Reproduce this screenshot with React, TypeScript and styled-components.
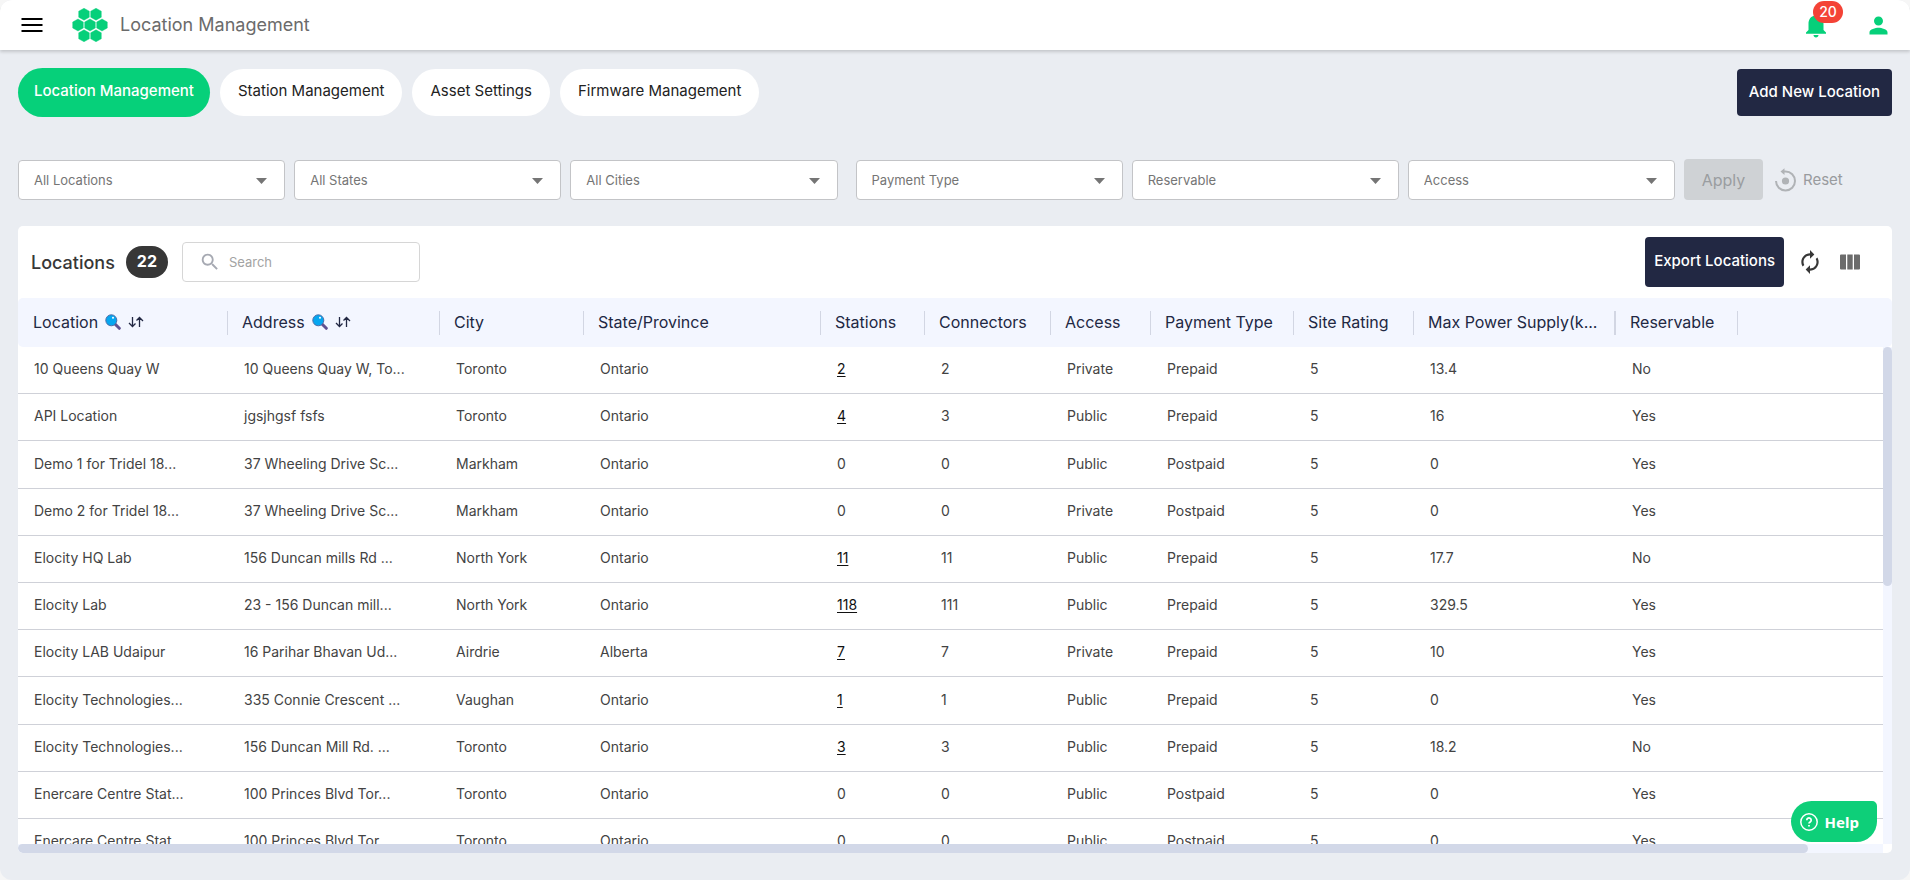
import React from "react";
import styled, { createGlobalStyle } from "styled-components";

const GlobalStyle = createGlobalStyle`
  *, *::before, *::after { box-sizing: border-box; }
  body { margin: 0; background: #f6f6f6; }
  body, button, input, select { font-family: Inter, "Liberation Sans", sans-serif; }
`;

const Page = styled.div`
  height: 100vh;
  min-height: 480px;
  display: flex;
  flex-direction: column;
  overflow: hidden;
  border-radius: 12px;
  background: #eaedf2;
`;

const TopBar = styled.header`
  flex: none;
  height: 50px;
  padding: 0 18px 0 20px;
  display: flex;
  align-items: center;
  background: #fff;
  box-shadow: 0 2px 3px rgba(0, 0, 0, 0.16);
`;

const IconButton = styled.button`
  display: grid;
  place-items: center;
  padding: 0;
  border: 0;
  background: none;
  color: inherit;
`;

const Logo = styled.svg`
  width: 36px;
  height: 34px;
  margin-left: 28px;
`;

const PageTitle = styled.h1`
  margin: 0 auto 0 12px;
  font-size: 18px;
  font-weight: 400;
  line-height: 24px;
  color: #6b6b6b;
`;

const TopActions = styled.div`
  display: flex;
  align-items: center;
  gap: 34px;
  color: #06d07a;
`;

const BellWrap = styled.div`
  position: relative;
`;

const CountBadge = styled.span`
  position: absolute;
  left: 12px;
  top: -9px;
  width: 30px;
  height: 22px;
  border-radius: 11px;
  background: #f44336;
  color: #fff;
  font-size: 14px;
  font-weight: 500;
  line-height: 21px;
  text-align: center;
`;

const TabBar = styled.nav`
  flex: none;
  display: flex;
  align-items: center;
  gap: 10px;
  padding: 18px 18px 0;
`;

const Tab = styled.button<{ $active?: boolean }>`
  height: ${(p) => (p.$active ? 49 : 47)}px;
  padding: 0 ${(p) => (p.$active ? 16 : 18)}px 4px;
  border: 0;
  border-radius: 25px;
  font-size: 15px;
  font-weight: ${(p) => (p.$active ? 500 : 400)};
  white-space: nowrap;
  background: ${(p) => (p.$active ? "#06d07a" : "#fff")};
  color: ${(p) => (p.$active ? "#fff" : "#222")};
`;

const DarkButton = styled.button<{ $tall?: boolean }>`
  height: ${(p) => (p.$tall ? 50 : 47)}px;
  padding: 0 ${(p) => (p.$tall ? 9 : 12)}px 3px;
  border: 0;
  border-radius: 4px;
  background: #222843;
  color: #fff;
  font-size: 15px;
  font-weight: 500;
  white-space: nowrap;
`;

const Spacer = styled.div`
  flex: 1;
`;

const FilterBar = styled.form`
  flex: none;
  display: flex;
  align-items: center;
  gap: 9px;
  margin: 42px 18px 26px;
`;

const FilterGroup = styled.div`
  flex: 1;
  display: flex;
  gap: 9px;
  & + & { margin-left: 9px; }
`;

const SelectBox = styled.div`
  flex: 1;
  min-width: 0;
  position: relative;
  height: 40px;
  border: 1px solid #c3c4c7;
  border-radius: 4px;
  background: #fff;
`;

const Select = styled.select`
  appearance: none;
  width: 100%;
  height: 100%;
  padding: 0 36px 0 15px;
  border: 0;
  background: none;
  color: #757575;
  font-size: 13px;
`;

const Caret = styled.svg`
  position: absolute;
  right: 17px;
  top: 17px;
  width: 11px;
  height: 6px;
  fill: #757575;
  pointer-events: none;
`;

const ApplyButton = styled.button`
  width: 79px;
  height: 41px;
  border: 0;
  border-radius: 4px;
  background: #cfd2d5;
  color: #9a9da0;
  font-size: 16px;
`;

const ResetButton = styled.button`
  width: 120px;
  display: flex;
  align-items: center;
  gap: 6px;
  padding: 0 0 0 2px;
  border: 0;
  background: none;
  color: #999b9e;
  font-size: 15px;
`;

const Card = styled.section`
  flex: 1;
  min-height: 0;
  display: flex;
  flex-direction: column;
  margin: 0 18px 27px;
  border-radius: 5px;
  overflow: hidden;
  background: #fff;
`;

const Toolbar = styled.div`
  flex: none;
  height: 72px;
  display: flex;
  align-items: center;
  padding: 0 32px 0 13px;
`;

const CardTitle = styled.h2`
  margin: 0;
  font-size: 18px;
  font-weight: 500;
  color: #373737;
`;

const TotalBadge = styled.span`
  margin: 0 14px 0 11px;
  width: 42px;
  height: 32px;
  border-radius: 16px;
  background: #373737;
  color: #fff;
  font-size: 16px;
  font-weight: 700;
  line-height: 31px;
  text-align: center;
`;

const SearchBox = styled.label`
  width: 238px;
  height: 40px;
  display: flex;
  align-items: center;
  gap: 8px;
  padding: 0 16px;
  border: 1px solid #d6d6d6;
  border-radius: 4px;
  color: #a6a9b2;
`;

const SearchInput = styled.input`
  flex: 1;
  min-width: 0;
  padding: 0;
  border: 0;
  outline: 0;
  font-size: 13px;
  color: #3d3d3d;
  &::placeholder { color: #a3a3a3; }
`;

const ToolIcons = styled.div`
  display: flex;
  align-items: center;
  gap: 17px;
  margin-left: 13px;
  color: #373737;
`;

const TableArea = styled.div`
  flex: 1;
  min-height: 0;
  position: relative;
  overflow: hidden;
`;

const Table = styled.table`
  width: 100%;
  table-layout: fixed;
  border-collapse: separate;
  border-spacing: 0;
`;

const HeadCell = styled.th`
  height: 49px;
  padding: 0 0 0 14px;
  background: #f3f6ff;
  color: #222843;
  font-size: 16px;
  font-weight: 400;
  text-align: left;
  white-space: nowrap;
  &:first-child { padding-left: 15px; border-radius: 5px 0 0 5px; }
  &:last-child { border-radius: 0 5px 5px 0; }
`;

const HeadInner = styled.div<{ $wideRule?: boolean }>`
  height: 24px;
  padding-bottom: 2px;
  display: flex;
  align-items: center;
  gap: 7px;
  border-right: ${(p) => (p.$wideRule ? 2 : 1)}px solid #d2d6e3;
`;

const Row = styled.tr`
  height: 47px;
  &:nth-child(5n + 3) { height: 48px; }
`;

const Cell = styled.td`
  padding: 0 0 3px 16px;
  border-bottom: 1px solid #cfd1d8;
  color: #434343;
  font-size: 14px;
  white-space: nowrap;
`;

const StationLink = styled.a`
  color: #111;
  text-decoration: underline;
  text-underline-offset: 2px;
`;

const VerticalTrack = styled.div`
  position: absolute;
  top: 49px;
  right: 0;
  bottom: 0;
  width: 9px;
  background: #f3f6ff;
`;

const VerticalThumb = styled.div`
  height: 48%;
  border-radius: 5px;
  background: #d2d8e8;
`;

const HorizontalTrack = styled.div`
  flex: none;
  height: 9px;
  margin-right: 9px;
  background: #f3f6ff;
`;

const HorizontalThumb = styled.div`
  width: 96%;
  height: 9px;
  border-radius: 5px;
  background: #d2d8e8;
`;

const HelpButton = styled.button`
  position: fixed;
  right: 33px;
  bottom: 38px;
  height: 41px;
  display: flex;
  align-items: center;
  gap: 7px;
  padding: 0 18px 0 9px;
  border: 0;
  border-radius: 21px 5px 21px 21px;
  background: #0ecf79;
  color: #fff;
  font-family: "Noto Sans", sans-serif;
  font-size: 15px;
  font-weight: 700;
`;

const Glyph = ({ d, size = 24 }: { d: string; size?: number }) => (
  <svg width={size} height={size} viewBox="0 0 24 24" fill="currentColor" aria-hidden="true">
    <path d={d} />
  </svg>
);

const MENU = "M1.500 5h21v2h-21zM1.500 11h21v2h-21zM1.500 17h21v2h-21z";
const BELL =
  "M12 22c1.100 0 2-.9 2-2h-4c0 1.100.9 2 2 2m6-6v-5c0-3.070-1.630-5.640-4.500-6.320V4c0-.83-.67-1.500-1.500-1.500s-1.500.67-1.500 1.500v.68C7.640 5.360 6 7.920 6 11v5l-2 2v1h16v-1z";
const PERSON =
  "M12 12c2.210 0 4-1.790 4-4s-1.790-4-4-4-4 1.790-4 4 1.790 4 4 4m0 2c-2.670 0-8 1.340-8 4v2h16v-2c0-2.660-5.330-4-8-4";
const SEARCH =
  "M15.500 14h-.79l-.28-.27C15.410 12.590 16 11.110 16 9.500 16 5.910 13.090 3 9.500 3S3 5.910 3 9.500 5.910 16 9.500 16c1.610 0 3.090-.59 4.230-1.570l.27.28v.79l5 4.990L20.490 19zm-6 0C7.010 14 5 11.990 5 9.500S7.010 5 9.500 5 14 7.010 14 9.500 11.990 14 9.500 14";
const RENEW =
  "M12 6v3l4-4-4-4v3c-4.420 0-8 3.580-8 8 0 1.570.46 3.030 1.240 4.260L6.700 14.800c-.45-.83-.7-1.790-.7-2.800 0-3.310 2.690-6 6-6m6.760 1.740L17.300 9.200c.44.84.7 1.790.7 2.800 0 3.310-2.690 6-6 6v-3l-4 4 4 4v-3c4.420 0 8-3.580 8-8 0-1.570-.46-3.030-1.240-4.260";

const hexPoints = (cx: number, cy: number) =>
  [[0, -6], [5.3, -3], [5.3, 3], [0, 6], [-5.3, 3], [-5.3, -3]]
    .map(([x, y]) => `${cx + x},${cy + y}`)
    .join(" ");

const BrandMark = () => (
  <Logo viewBox="0 0 36 34" aria-hidden="true">
    {[[12, 6.2], [24, 6.2], [6, 17], [18, 17], [30, 17], [12, 27.8], [24, 27.8]].map(([x, y]) => (
      <polygon key={`${x}-${y}`} points={hexPoints(x, y)} fill="#06d07a" stroke="#06d07a" strokeWidth="0.4" strokeLinejoin="round" />
    ))}
  </Logo>
);

const ResetIcon = () => (
  <svg width="23" height="24" viewBox="0 0 23 24" aria-hidden="true">
    <path d="M2 13A9.500 9.500 0 1 0 11.500 3.500H9" fill="none" stroke="#b0b3b6" strokeWidth="2" />
    <path d="M6.500 3.500l4-3.300v6.800z" fill="#b0b3b6" />
    <circle cx="11.500" cy="13" r="3.600" fill="#b0b3b6" />
  </svg>
);

const ColumnsIcon = () => (
  <svg width="20" height="16" viewBox="0 0 20 16" fill="#6b6b6b" aria-hidden="true">
    <path d="M1 .5h5v15H1a1 1 0 0 1-1-1v-13a1 1 0 0 1 1-1zM7.300.5h5.400v15H7.300zM14 .5h5a1 1 0 0 1 1 1v13a1 1 0 0 1-1 1h-5z" />
  </svg>
);

const LensIcon = () => (
  <svg width="16" height="16" viewBox="0 0 16 16" aria-hidden="true">
    <path d="M10 10l4.300 4.300" stroke="#5f5190" strokeWidth="3" strokeLinecap="round" />
    <circle cx="6.300" cy="6.300" r="5.500" fill="#05a6f0" stroke="#4a6da8" strokeWidth="1" />
    <circle cx="8" cy="3.800" r="1" fill="#fff" />
  </svg>
);

const SortIcon = () => (
  <svg width="16" height="12" viewBox="0 0 16 12" fill="none" stroke="#222843" strokeWidth="1.300" aria-hidden="true">
    <path d="M4.500 1v9.500M1 7l3.500 3.500L7.500 7.500M11.500 11V1.500M8.500 4.500l3-3L15 5" />
  </svg>
);

const HelpIcon = () => (
  <svg width="18" height="18" viewBox="0 0 18 18" fill="none" stroke="#fff" strokeWidth="1.500" aria-hidden="true">
    <circle cx="9" cy="9" r="8.200" />
    <path d="M6.800 7.200a2.200 2.200 0 1 1 3.400 1.800c-.8.5-1.200.8-1.200 1.600" strokeWidth="1.700" />
    <path d="M9 11.900v1.700" strokeWidth="1.800" />
  </svg>
);

const FilterSelect = ({ label }: { label: string }) => (
  <SelectBox>
    <Select aria-label={label} defaultValue="">
      <option value="">{label}</option>
    </Select>
    <Caret viewBox="0 0 11 6">
      <path d="M0 0h11L5.500 6z" />
    </Caret>
  </SelectBox>
);

type Column = { label: string; width?: number; sortable?: boolean; wideRule?: boolean };

const columns: Column[] = [
  { label: "Location", width: 210, sortable: true },
  { label: "Address", width: 212, sortable: true },
  { label: "City", width: 144 },
  { label: "State/Province", width: 237 },
  { label: "Stations", width: 104 },
  { label: "Connectors", width: 126 },
  { label: "Access", width: 100 },
  { label: "Payment Type", width: 143 },
  { label: "Site Rating", width: 120 },
  { label: "Max Power Supply(k...", width: 202, wideRule: true },
  { label: "Reservable", width: 122 },
];

const rows: string[][] = [
  ["10 Queens Quay W", "10 Queens Quay W, To...", "Toronto", "Ontario", "2", "2", "Private", "Prepaid", "5", "13.4", "No"],
  ["API Location", "jgsjhgsf fsfs", "Toronto", "Ontario", "4", "3", "Public", "Prepaid", "5", "16", "Yes"],
  ["Demo 1 for Tridel 18...", "37 Wheeling Drive Sc...", "Markham", "Ontario", "0", "0", "Public", "Postpaid", "5", "0", "Yes"],
  ["Demo 2 for Tridel 18...", "37 Wheeling Drive Sc...", "Markham", "Ontario", "0", "0", "Private", "Postpaid", "5", "0", "Yes"],
  ["Elocity HQ Lab", "156 Duncan mills Rd ...", "North York", "Ontario", "11", "11", "Public", "Prepaid", "5", "17.7", "No"],
  ["Elocity Lab", "23 - 156 Duncan mill...", "North York", "Ontario", "118", "111", "Public", "Prepaid", "5", "329.5", "Yes"],
  ["Elocity LAB Udaipur", "16 Parihar Bhavan Ud...", "Airdrie", "Alberta", "7", "7", "Private", "Prepaid", "5", "10", "Yes"],
  ["Elocity Technologies...", "335 Connie Crescent ...", "Vaughan", "Ontario", "1", "1", "Public", "Prepaid", "5", "0", "Yes"],
  ["Elocity Technologies...", "156 Duncan Mill Rd. ...", "Toronto", "Ontario", "3", "3", "Public", "Prepaid", "5", "18.2", "No"],
  ["Enercare Centre Stat...", "100 Princes Blvd Tor...", "Toronto", "Ontario", "0", "0", "Public", "Postpaid", "5", "0", "Yes"],
  ["Enercare Centre Stat...", "100 Princes Blvd Tor...", "Toronto", "Ontario", "0", "0", "Public", "Postpaid", "5", "0", "Yes"],
];

const STATIONS = 4;

export default function App() {
  return (
    <>
      <GlobalStyle />
      <Page>
        <TopBar>
          <IconButton aria-label="Menu"><Glyph d={MENU} /></IconButton>
          <BrandMark />
          <PageTitle>Location Management</PageTitle>
          <TopActions>
            <BellWrap>
              <IconButton aria-label="Notifications"><Glyph d={BELL} size={30} /></IconButton>
              <CountBadge>20</CountBadge>
            </BellWrap>
            <IconButton aria-label="Account"><Glyph d={PERSON} size={27} /></IconButton>
          </TopActions>
        </TopBar>

        <TabBar>
          <Tab $active>Location Management</Tab>
          <Tab>Station Management</Tab>
          <Tab>Asset Settings</Tab>
          <Tab>Firmware Management</Tab>
          <Spacer />
          <DarkButton>Add New Location</DarkButton>
        </TabBar>

        <FilterBar onSubmit={(e) => e.preventDefault()}>
          <FilterGroup>
            <FilterSelect label="All Locations" />
            <FilterSelect label="All States" />
            <FilterSelect label="All Cities" />
          </FilterGroup>
          <FilterGroup>
            <FilterSelect label="Payment Type" />
            <FilterSelect label="Reservable" />
            <FilterSelect label="Access" />
          </FilterGroup>
          <ApplyButton type="submit">Apply</ApplyButton>
          <ResetButton type="reset"><ResetIcon />Reset</ResetButton>
        </FilterBar>

        <Card>
          <Toolbar>
            <CardTitle>Locations</CardTitle>
            <TotalBadge>22</TotalBadge>
            <SearchBox>
              <Glyph d={SEARCH} size={22} />
              <SearchInput type="text" placeholder="Search" aria-label="Search" />
            </SearchBox>
            <Spacer />
            <DarkButton $tall>Export Locations</DarkButton>
            <ToolIcons>
              <IconButton aria-label="Refresh"><Glyph d={RENEW} size={26} /></IconButton>
              <IconButton aria-label="Choose columns"><ColumnsIcon /></IconButton>
            </ToolIcons>
          </Toolbar>
          <TableArea>
            <Table>
              <colgroup>
                {columns.map((c) => <col key={c.label} width={c.width} />)}
                <col />
              </colgroup>
              <thead>
                <tr>
                  {columns.map((c) => (
                    <HeadCell key={c.label} scope="col">
                      <HeadInner $wideRule={c.wideRule}>
                        {c.label}
                        {c.sortable && <><LensIcon /><SortIcon /></>}
                      </HeadInner>
                    </HeadCell>
                  ))}
                  <HeadCell as="td" />
                </tr>
              </thead>
              <tbody>
                {rows.map((row, r) => (
                  <Row key={r}>
                    {row.map((value, c) => (
                      <Cell key={c}>
                        {c === STATIONS && value !== "0" ? <StationLink href="#stations">{value}</StationLink> : value}
                      </Cell>
                    ))}
                    <Cell />
                  </Row>
                ))}
              </tbody>
            </Table>
            <VerticalTrack><VerticalThumb /></VerticalTrack>
          </TableArea>
          <HorizontalTrack><HorizontalThumb /></HorizontalTrack>
        </Card>
      </Page>
      <HelpButton><HelpIcon />Help</HelpButton>
    </>
  );
}
